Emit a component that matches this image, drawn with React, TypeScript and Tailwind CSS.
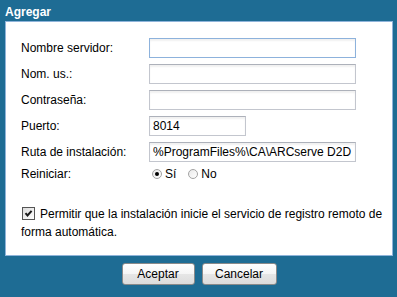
import React from "react";

const font = { fontFamily: '"Liberation Sans", Arial, sans-serif' };

function Field({ label, value, short, focused }: { label: string; value?: string; short?: boolean; focused?: boolean }) {
  return (
    <div className="flex items-center h-[20px]">
      <label className="w-[128px] shrink-0">{label}</label>
      <input
        defaultValue={value}
        className={`h-[20px] ${short ? "w-[97px]" : "w-[207px]"} border ${focused ? "border-[#8db2dc]" : "border-[#c3c6ce] border-t-[#adb1ba]"} bg-white px-[3px] text-[12px] text-black outline-none shadow-[inset_0_2px_2px_rgba(0,0,0,0.06)]`}
      />
    </div>
  );
}

function Radio({ checked, label }: { checked?: boolean; label: string }) {
  return (
    <span className="flex items-center gap-[3px]">
      <span className="w-[10px] h-[10px] rounded-full border border-[#a3a3a3] bg-gradient-to-br from-[#e9e9e9] to-white flex items-center justify-center">
        {checked ? <span className="w-[4px] h-[4px] rounded-full bg-black" /> : null}
      </span>
      <span>{label}</span>
    </span>
  );
}

const btn =
  "h-[22px] rounded-[3px] border border-[#8a8a8a] bg-[linear-gradient(#ffffff_0%,#f5f5f5_50%,#e6e6e6_51%,#dcdcdc_100%)] text-[12px]";

export default function App() {
  return (
    <div className="w-[397px] h-[297px] bg-[#1e6c94] flex flex-col text-[12px] text-black" style={font}>
      {/* title */}
      <div className="h-[21px] pl-[5px] pt-[2px] flex items-center font-bold text-white">Agregar</div>

      {/* body */}
      <div className="ml-[5px] mr-[4px] h-[235px] bg-white border border-[#8fb4da] pl-[15px] pt-[16px] pr-[2px]">
        <div className="flex flex-col gap-[6px]">
          <Field label="Nombre servidor:" focused />
          <Field label="Nom. us.:" />
          <Field label="Contraseña:" />
          <Field label="Puerto:" value="8014" short />
          <Field label="Ruta de instalación:" value="%ProgramFiles%\CA\ARCserve D2D" />
          <div className="flex items-center h-[12px]">
            <span className="w-[128px] shrink-0">Reiniciar:</span>
            <div className="flex items-center gap-[12px] pl-[3px]">
              <Radio checked label="Sí" />
              <Radio label="No" />
            </div>
          </div>
        </div>

        <div className="mt-[25px] leading-[18px]">
          <span className="inline-block align-[-2px] w-[13px] h-[13px] border border-[#555] bg-gradient-to-br from-[#dcdcdc] to-white mr-[5px] ml-[1px] relative">
            <svg viewBox="0 0 11 11" className="absolute inset-0 w-[11px] h-[11px]">
              <path d="M2.5 5.2 L4.5 7.4 L8.6 2.8" stroke="#1a1a1a" strokeWidth="2" fill="none" />
            </svg>
          </span>
          Permitir que la instalación inicie el servicio de registro remoto de
          <br />
          forma automática.
        </div>
      </div>

      {/* buttons */}
      <div className="flex justify-center gap-[7px] pt-[7px] pl-[1px]">
        <button className={`w-[73px] ${btn}`}>Aceptar</button>
        <button className={`w-[75px] ${btn}`}>Cancelar</button>
      </div>
    </div>
  );
}
